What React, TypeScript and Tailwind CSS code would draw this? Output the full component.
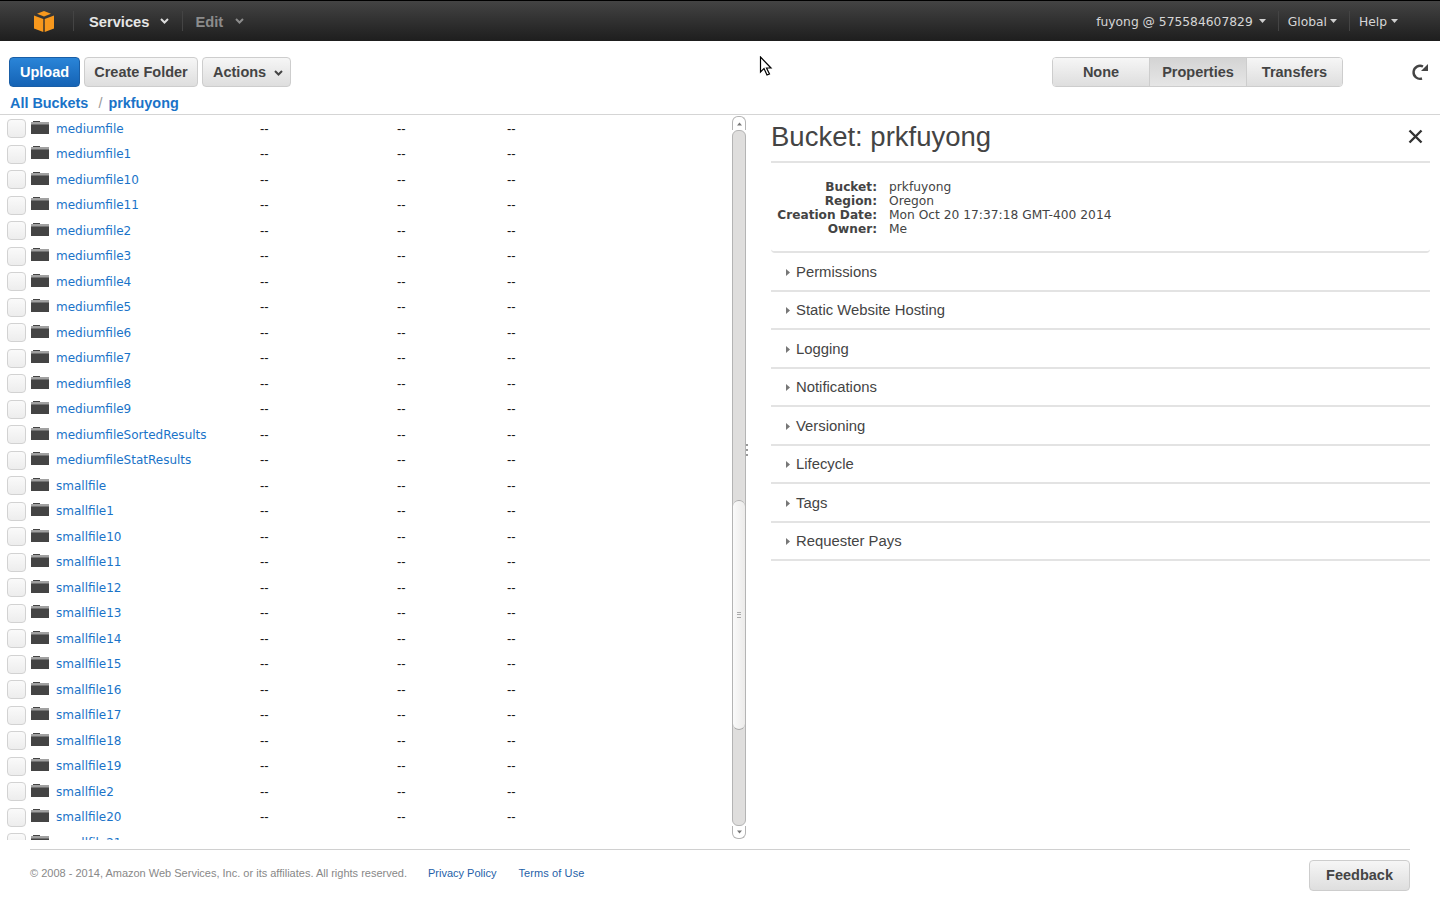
import React from "react";

const names = ["mediumfile","mediumfile1","mediumfile10","mediumfile11","mediumfile2","mediumfile3","mediumfile4","mediumfile5","mediumfile6","mediumfile7","mediumfile8","mediumfile9","mediumfileSortedResults","mediumfileStatResults","smallfile","smallfile1","smallfile10","smallfile11","smallfile12","smallfile13","smallfile14","smallfile15","smallfile16","smallfile17","smallfile18","smallfile19","smallfile2","smallfile20","smallfile21"];
const sections = [["Permissions","h-[39px] pt-[2px]"],["Static Website Hosting","h-[38px]"],["Logging","h-[39px] pt-[2px]"],["Notifications","h-[38px]"],["Versioning","h-[39px] pt-[2px]"],["Lifecycle","h-[38px]"],["Tags","h-[39px] pt-[2px]"],["Requester Pays","h-[38px]"]];

const Caret = ({ c = "#cfcfcf", w = 7 }: { c?: string; w?: number }) => (
  <svg width={w} height="4" viewBox="0 0 7 4"><path d="M0 0h7L3.5 4z" fill={c} /></svg>
);
const Chevron = ({ c }: { c: string }) => (
  <svg width="9" height="6" viewBox="0 0 9 6"><path d="M1 1l3.5 3.5L8 1" stroke={c} strokeWidth="2" fill="none" /></svg>
);
const Folder = () => (
  <svg width="18" height="13" viewBox="0 0 18 13" className="shrink-0"><path d="M2 0h7v1H2zM0 1.5h18v1H0zM0 3.2h18V13H0z" fill="#444" /></svg>
);

const btn = "shrink-0 h-[30px] pt-[1px] rounded-[4px] border border-[#cdcdcd] bg-gradient-to-b from-[#f6f6f6] to-[#dedede] text-[#444] font-bold text-[14.5px] flex items-center justify-center";

function Row({ name }: { name: string }) {
  return (
    <div className="h-[25.5px] flex items-center shrink-0 text-[13px]">
      <span className="ml-[7px] w-[19px] h-[19px] rounded-[4px] border border-[#d2d2d2] bg-gradient-to-b from-[#fafafa] to-[#ededed] shrink-0" />
      <span className="ml-[5px] mb-[3px] flex w-[19px]"><Folder /></span>
      <a className="ml-[6px] w-[204px] shrink-0 text-[#1a73c8] font-['DejaVu_Sans',sans-serif] text-[12px]">{name}</a>
      <span className="w-[137px] shrink-0 mb-[1px] text-[#111] font-['Liberation_Sans',sans-serif]">--</span>
      <span className="w-[110px] shrink-0 mb-[1px] text-[#111] font-['Liberation_Sans',sans-serif]">--</span>
      <span className="mb-[1px] text-[#111] font-['Liberation_Sans',sans-serif]">--</span>
    </div>
  );
}

export default function App() {
  return (
    <div className="relative w-[1440px] h-[900px] overflow-hidden bg-white flex flex-col font-['Liberation_Sans',sans-serif]">
      <header className="h-[41px] shrink-0 flex items-center bg-gradient-to-b from-[#444444] to-[#1e1e1e] border-t border-black text-[14.7px]">
        <div className="w-[74px] h-[20px] border-r border-[#444] flex items-center pl-[34px] shrink-0">
          <svg width="20" height="21" viewBox="0 0 20 21"><path d="M10 0l7 2.7L10 5.4 3 2.7z" fill="#f7981d" /><path d="M0 4.5l9.3 3.4V21L0 17.5zM20 4.5l-9.3 3.4V21L20 17.5z" fill="#f7981d" /></svg>
        </div>
        <span className="ml-[15px] pt-[2px] font-bold text-[#e6e6e6]">Services</span>
        <span className="ml-[11px] mr-[13px] flex"><Chevron c="#dcdcdc" /></span>
        <span className="w-px h-[20px] bg-[#444]" />
        <span className="ml-[12px] pt-[2px] font-bold text-[#8c8c8c]">Edit</span>
        <span className="ml-[12px] flex"><Chevron c="#8c8c8c" /></span>
        <div className="ml-auto flex items-center text-[#d6d6d6] font-['DejaVu_Sans',sans-serif] text-[12.3px]">
          <span className="pt-[2px]">fuyong @ 575584607829</span>
          <span className="ml-[6px] mr-[12px] flex"><Caret /></span>
          <span className="w-px h-[20px] bg-[#444]" />
          <span className="ml-[9px] pt-[2px]">Global</span>
          <span className="ml-[3px] mr-[12px] flex"><Caret /></span>
          <span className="w-px h-[20px] bg-[#444]" />
          <span className="ml-[9px] pt-[2px]">Help</span>
          <span className="ml-[4px] mr-[42px] flex"><Caret /></span>
        </div>
      </header>

      <div className="h-[46px] shrink-0 flex items-end pl-[9px]">
        <button className="shrink-0 w-[71px] h-[30px] pt-[1px] rounded-[4px] border border-[#1a5ea6] bg-gradient-to-b from-[#2a85d8] to-[#1563b5] text-white font-bold text-[14.5px]">Upload</button>
        <button className={`${btn} ml-[4px] w-[114px]`}>Create Folder</button>
        <button className={`${btn} ml-[4px] w-[89px] gap-[8px] !justify-start pl-[10px]`}>Actions <Chevron c="#444" /></button>
        <div className="shrink-0 ml-[761px] w-[291px] h-[30px] rounded-[4px] border border-[#cdcdcd] flex overflow-hidden text-[#444] font-bold text-[14.5px]">
          <span className="w-[96px] pt-[1px] flex items-center justify-center bg-gradient-to-b from-[#f6f6f6] to-[#dedede]">None</span>
          <span className="w-[98px] pt-[1px] flex items-center justify-center border-x border-[#cdcdcd] bg-gradient-to-b from-[#d4d4d4] to-[#e6e6e6]">Properties</span>
          <span className="flex-1 pt-[1px] flex items-center justify-center bg-gradient-to-b from-[#f6f6f6] to-[#dedede]">Transfers</span>
        </div>
        <svg className="shrink-0 ml-[68px] mb-[6px]" width="18" height="18" viewBox="0 0 18 18"><path d="M12 3.5A6.5 6.5 0 1 0 11 15.5" stroke="#444" strokeWidth="2.4" fill="none" /><path d="M17 1v7h-7z" fill="#444" /></svg>
      </div>

      <div className="h-[28px] shrink-0 flex items-center pl-[10px] border-b border-[#d5d5d5] text-[14.4px] font-bold text-[#1a73c8] pt-[6px]">
        <span>All Buckets</span>
        <span className="ml-[10px] mr-[6px] text-[#999] font-normal">/</span>
        <span>prkfuyong</span>
      </div>

      <main className="h-[725px] shrink-0 flex">
        <section className="w-[732px] shrink-0 h-full overflow-hidden flex flex-col pt-[1px]">
          {names.map((n) => <Row key={n} name={n} />)}
        </section>
        <div className="w-[14px] shrink-0 flex flex-col h-full pt-[1px] pb-[1px]">
          <span className="h-[14px] shrink-0 rounded-t-[6px] bg-white border-x border-t border-[#b4b4b4] flex items-center justify-center"><svg width="5" height="4" viewBox="0 0 7 4"><path d="M0 4h7L3.5 0z" fill="#777" /></svg></span>
          <div className="flex-1 flex flex-col rounded-[6px] border-x border-y border-[#b4b4b4] bg-[#dfdedd]">
            <span className="h-[369px] shrink-0" />
            <span className="h-[230px] shrink-0 rounded-[6px] bg-gradient-to-r from-[#fafafa] to-[#ecebea] border-y border-[#aaa] flex items-center justify-center">
              <span className="w-[4px] h-[6px] mt-[-1px] border-y border-[#aaa] bg-[linear-gradient(#aaa,#aaa)] bg-[length:100%_1px] bg-center bg-no-repeat" />
            </span>
          </div>
          <span className="h-[13px] shrink-0 rounded-b-[6px] bg-white border-x border-b border-[#b4b4b4] flex items-center justify-center"><Caret c="#777" w={5} /></span>
        </div>
        <div className="w-[25px] shrink-0 relative">
          <span className="absolute left-0 top-[328px] w-[4px] h-[14px] bg-white flex flex-col justify-between py-[1px]">
            <i className="block w-[2px] h-[2px] bg-[#999]" /><i className="block w-[2px] h-[2px] bg-[#999]" /><i className="block w-[2px] h-[2px] bg-[#999]" />
          </span>
        </div>
        <aside className="w-[659px] shrink-0 text-[#444]">
          <div className="h-[48px] border-b-2 border-[#e3e3e3] flex items-center justify-between pr-[7px] relative">
            <h1 className="text-[27.5px] font-normal text-[#444] pb-[3px]">Bucket: prkfuyong</h1>
            <svg width="15" height="15" viewBox="0 0 15 15" className="mb-[3px]"><path d="M1.5 1.5l12 12M13.5 1.5l-12 12" stroke="#333" strokeWidth="2.4" /></svg>
          </div>
          <div className="h-[90px] pt-[17px] border-b-2 border-[#e3e3e3] rounded-b-[4px] font-['DejaVu_Sans',sans-serif] text-[12.25px] leading-[14px] grid grid-cols-[106px_1fr] gap-x-[12px] content-start">
            <b className="text-right text-[12.15px]">Bucket:</b><span>prkfuyong</span>
            <b className="text-right text-[12.15px]">Region:</b><span>Oregon</span>
            <b className="text-right text-[12.15px]">Creation Date:</b><span>Mon Oct 20 17:37:18 GMT-400 2014</span>
            <b className="text-right text-[12.15px]">Owner:</b><span>Me</span>
          </div>
          {sections.map(([s, h]) => (
            <div key={s} className={`${h} border-b-2 border-[#e3e3e3] flex items-center pl-[15px] text-[14.85px]`}>
              <svg width="4" height="7" viewBox="0 0 4 7" className="mr-[6px]"><path d="M0 0l4 3.5L0 7z" fill="#777" /></svg>
              {s}
            </div>
          ))}
        </aside>
      </main>

      <footer className="flex-1 mx-[30px] mt-[9px] border-t border-[#d0d0d0] flex items-start relative">
        <span className="mt-[15px] text-[11px] text-[#888]">© 2008 - 2014, Amazon Web Services, Inc. or its affiliates. All rights reserved.</span>
        <a className="mt-[15px] ml-[21px] text-[11px] text-[#1f5fa8]">Privacy Policy</a>
        <a className="mt-[15px] ml-[22px] text-[11px] tracking-[0.1px] text-[#1f5fa8]">Terms of Use</a>
        <button className={`${btn} ml-auto mt-[10px] w-[101px] h-[31px]`}>Feedback</button>
      </footer>

      <svg className="absolute left-[759px] top-[56px]" width="15" height="21" viewBox="0 0 15 21"><path d="M1.5 1v15l3.5-3.5L8 19l2.5-1-3-6H12z" fill="#fff" stroke="#000" strokeWidth="1.2" /></svg>
    </div>
  );
}
